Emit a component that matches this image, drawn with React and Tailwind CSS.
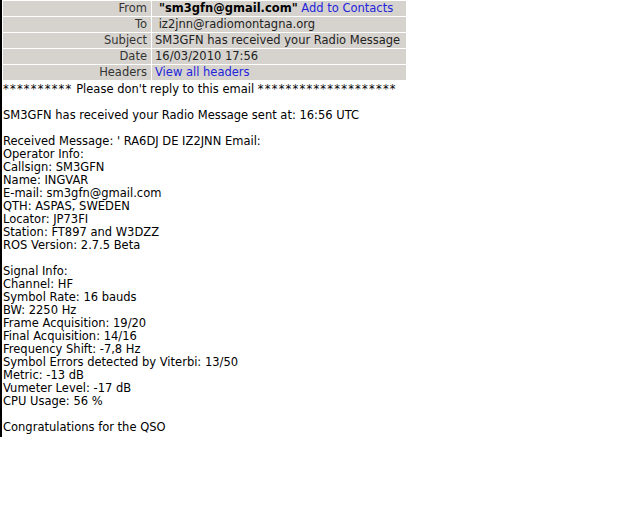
export default function App() {
    const rows = [
        { label: 'From', value: <><span className="font-bold text-black">&nbsp;"sm3gfn@gmail.com"</span> <span className="text-[#2323dc]">Add to Contacts</span></> },
        { label: 'To', value: <>&nbsp;iz2jnn@radiomontagna.org</> },
        { label: 'Subject', value: 'SM3GFN has received your Radio Message' },
        { label: 'Date', value: '16/03/2010 17:56' },
        { label: 'Headers', value: <span className="text-[#2323dc]">View all headers</span> },
    ];

    const body = [
        '',
        'SM3GFN has received your Radio Message sent at: 16:56 UTC',
        '',
        'Received Message: \' RA6DJ DE IZ2JNN Email:',
        'Operator Info:',
        'Callsign: SM3GFN',
        'Name: INGVAR',
        'E-mail: sm3gfn@gmail.com',
        'QTH: ASPAS, SWEDEN',
        'Locator: JP73FI',
        'Station: FT897 and W3DZZ',
        'ROS Version: 2.7.5 Beta',
        '',
        'Signal Info:',
        'Channel: HF',
        'Symbol Rate: 16 bauds',
        'BW: 2250 Hz',
        'Frame Acquisition: 19/20',
        'Final Acquisition: 14/16',
        'Frequency Shift: -7,8 Hz',
        'Symbol Errors detected by Viterbi: 13/50',
        'Metric: -13 dB',
        'Vumeter Level: -17 dB',
        'CPU Usage: 56 %',
        '',
        'Congratulations for the QSO',
    ];

    return (
        <div className="min-h-[512px] w-[640px] bg-white text-[11.5px] leading-[13px] text-black" style={{ fontFamily: '"DejaVu Sans", Verdana, sans-serif' }}>
            <div className="w-[407px] border-l-2 border-black pb-[3px]">
                <table className="w-[405px] border-separate border-spacing-[1px]">
                    <tbody>
                        {rows.map((r) => (
                            <tr key={r.label} className="h-[15px]">
                                <td className="w-[148px] bg-[#d6d3ce] p-0 pr-[4px] text-right text-[#333]">{r.label}</td>
                                <td className="bg-[#d6d3ce] p-0 pl-[3px] text-[#222] whitespace-nowrap">{r.value}</td>
                            </tr>
                        ))}
                    </tbody>
                </table>
                <div className="pl-[1px] pt-[2px]">
                    <div className="h-[13px] whitespace-pre">
                        <span className="tracking-[1.2px]">**********</span> Please don't reply to this email <span className="tracking-[1.2px]">********************</span>
                    </div>
                    {body.map((line, i) => (
                        <div key={i} className="h-[13px] whitespace-pre">{line}</div>
                    ))}
                </div>
            </div>
        </div>
    );
}
